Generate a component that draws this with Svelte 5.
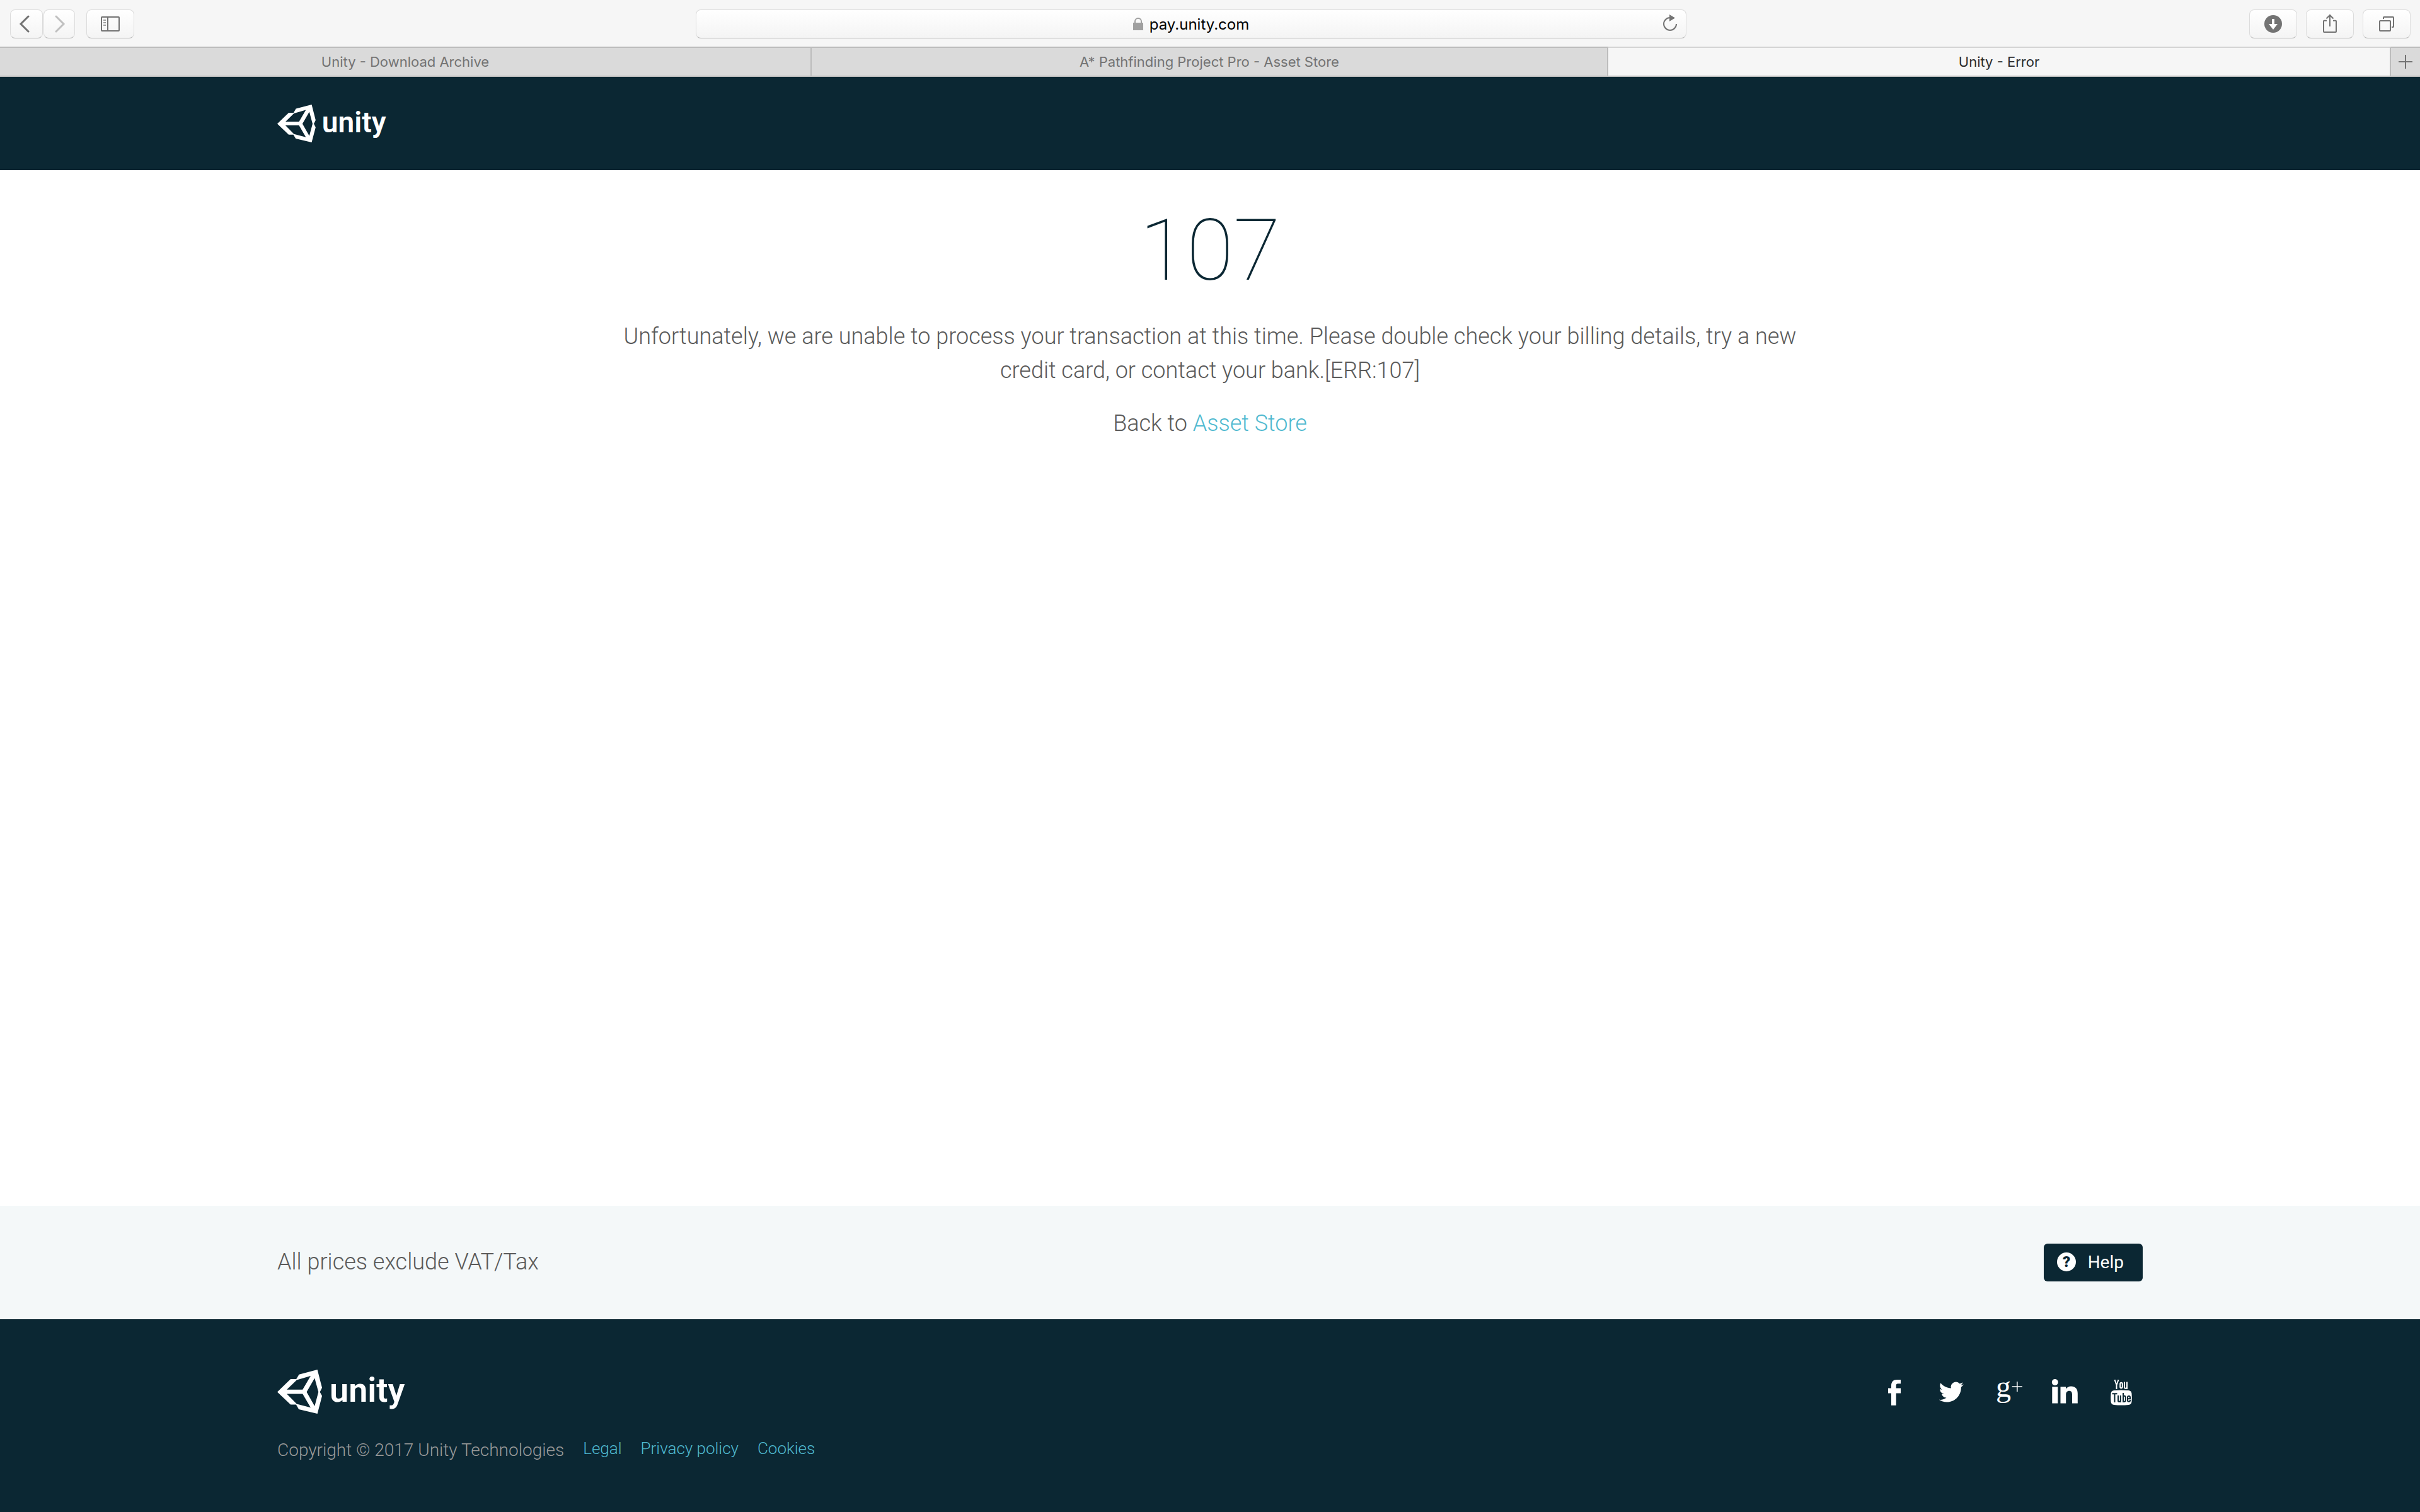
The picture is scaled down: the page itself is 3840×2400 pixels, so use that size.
<script>
  const tabs = [
    { title: 'Unity - Download Archive', active: false },
    { title: 'A* Pathfinding Project Pro - Asset Store', active: false },
    { title: 'Unity - Error', active: true }
  ];
  const legalLinks = ['Legal', 'Privacy policy', 'Cookies'];
</script>

{#snippet cube()}
  <svg class="cube" viewBox="0 0 212 209" aria-hidden="true">
    <path
      fill-rule="evenodd"
      d="M0 106 63 45H90L103 23 190 0 212 86 202 106 212 125 190 209 102 188 89 166H63ZM45 95H120L158 30 92 49ZM45 115 92 163 158 180 120 115ZM177 40 139 106 177 173 195 106Z"
    />
  </svg>
{/snippet}

<div class="window">
  <div class="toolbar">
    <div class="tools">
      <div class="history">
        <button class="tool back" aria-label="Back">
          <svg width="24" height="28" viewBox="0 0 24 28"><path d="M15 2 3 14l12 12" /></svg>
        </button>
        <button class="tool forward" aria-label="Forward">
          <svg width="24" height="28" viewBox="0 0 24 28"><path d="m7 2 12 12L7 26" /></svg>
        </button>
      </div>
      <button class="tool" aria-label="Show sidebar">
        <svg width="32" height="26" viewBox="0 0 32 26">
          <rect x="2" y="2" width="28" height="22" rx="1" />
          <path d="M12 2v22" />
          <path class="faint" d="M5 7h4M5 11h4M5 15h4" />
        </svg>
      </button>
    </div>

    <div class="address">
      <div class="site">
        <svg width="16" height="20" viewBox="0 0 16 20" aria-hidden="true">
          <path class="lock-body" d="M0 8h16v12H0z" />
          <path class="lock-bar" d="M3 9V6a5 5 0 0 1 10 0v3" />
        </svg>
        <input aria-label="Address" value="pay.unity.com" size="12" />
      </div>
      <button class="reload" aria-label="Reload">
        <svg width="24" height="34" viewBox="0 0 24 34">
          <path d="M22 17A10 10 0 1 1 12 7" />
          <path class="solid" d="M11 2l9 5.500-9 5.500z" />
        </svg>
      </button>
    </div>

    <div class="tools right">
      <button class="tool" aria-label="Downloads">
        <svg width="28" height="28" viewBox="0 0 28 28">
          <circle class="solid" cx="14" cy="14" r="14" />
          <path class="cutout" d="M12 6h4v8h5l-7 9-7-9h5z" />
        </svg>
      </button>
      <button class="tool" aria-label="Share">
        <svg width="28" height="32" viewBox="0 0 28 32">
          <path d="M9 10.700H5a1 1 0 0 0-1 1V28a1 1 0 0 0 1 1h18a1 1 0 0 0 1-1V11.700a1 1 0 0 0-1-1h-4M14 20V2M8.500 7.500 14 2l5.500 5.500" />
        </svg>
      </button>
      <button class="tool" aria-label="Show all tabs">
        <svg width="28" height="32" viewBox="0 0 28 32">
          <rect x="3" y="11" width="17" height="16" rx="1" />
          <path d="M9 8V6a1 1 0 0 1 1-1h14a1 1 0 0 1 1 1v14a1 1 0 0 1-1 1h-2" />
        </svg>
      </button>
    </div>
  </div>

  <div class="tabs">
    {#each tabs as tab}
      <button class="tab" class:active={tab.active}>{tab.title}</button>
    {/each}
    <button class="tab add" aria-label="New tab">
      <svg width="22" height="22" viewBox="0 0 22 22"><path d="M11 0v22M0 11h22" /></svg>
    </button>
  </div>

  <header class="band">
    <div class="container">
      <a class="logo" href="#home">{@render cube()}<span>unity</span></a>
    </div>
  </header>

  <main>
    <h1>107</h1>
    <p>
      Unfortunately, we are unable to process your transaction at this time. Please double check
      your billing details, try a new credit card, or contact your bank.[ERR:107]
    </p>
    <p>Back to <a href="#store">Asset Store</a></p>
  </main>

  <section class="prices">
    <div class="container">
      <span class="notice">All prices exclude VAT/Tax</span>
      <button class="help">
        <svg width="32" height="32" viewBox="0 0 32 32" aria-hidden="true">
          <circle cx="16" cy="15" r="15" />
          <text x="16" y="23" text-anchor="middle">?</text>
        </svg>
        Help
      </button>
    </div>
  </section>

  <footer class="band">
    <div class="container">
      <div class="about">
        <a class="logo large" href="#home">{@render cube()}<span>unity</span></a>
        <div class="legal">
          <span class="copyright">Copyright © 2017 Unity Technologies</span>
          {#each legalLinks as link}
            <a href="#legal">{link}</a>
          {/each}
        </div>
      </div>
      <nav class="social" aria-label="Social media">
        <a href="#facebook" aria-label="Facebook">
          <svg viewBox="0 0 48 48"><path d="M19 44.700V25.500h-5v-8h5v-4C19 7 22.500 4 28 4h6v6.300h-4.200c-2.300 0-3.100 1-3.100 3.200v4H34v8h-7.300v19.200z" /></svg>
        </a>
        <a href="#twitter" aria-label="Twitter">
          <svg viewBox="0 0 48 48">
            <path
              transform="translate(4.700 4) scale(1.630)"
              d="M23.953 4.570a10 10 0 01-2.825.775 4.958 4.958 0 002.163-2.723c-.951.555-2.005.959-3.127 1.184a4.920 4.920 0 00-8.384 4.482C7.690 8.095 4.067 6.130 1.640 3.162a4.822 4.822 0 00-.666 2.475c0 1.710.870 3.213 2.188 4.096a4.904 4.904 0 01-2.228-.616v.060a4.923 4.923 0 003.946 4.827 4.996 4.996 0 01-2.212.085 4.936 4.936 0 004.604 3.417 9.867 9.867 0 01-6.102 2.105c-.390 0-.779-.023-1.170-.067a13.995 13.995 0 007.557 2.209c9.053 0 13.998-7.496 13.998-13.985 0-.210 0-.420-.015-.630A9.935 9.935 0 0024 4.590z"
            />
          </svg>
        </a>
        <a href="#google" aria-label="Google Plus">
          <svg viewBox="0 0 48 48">
            <text class="g" x="5" y="31">g</text>
            <path d="M38 7h1.600v7.200H47v1.600h-7.400V23H38v-7.200h-7.300v-1.600H38z" />
          </svg>
        </a>
        <a href="#linkedin" aria-label="LinkedIn">
          <svg viewBox="0 0 48 48">
            <circle cx="8.800" cy="8" r="5" />
            <path d="M4.300 15.300h9v26.200h-9zM17.500 15.300h8.600v3.500c1.700-2.700 4.500-4.300 8.200-4.300 7 0 10.500 4 10.500 11.500v15.500H36V27.700c0-4-1.400-6-4.600-6-3.400 0-5.200 2.300-5.200 6v13.800h-8.700z" />
          </svg>
        </a>
        <a href="#youtube" aria-label="YouTube">
          <svg viewBox="0 0 48 48">
            <path class="line" d="M13.500 4l3 8.500 3-8.500M16.500 12v7M22.200 10.500a1.800 1.800 0 0 1 3.600 0v5a1.800 1.800 0 0 1-3.600 0zM29 7.500V16c0 2.500 2.800 2.300 4 0V7.500M33 15v4" />
            <path d="M12.500 21q11-1 23 0 4.500.500 5 5 .600 7 0 13-.500 4.500-5 5-11.500 1-23 0-4.500-.500-5-5-.600-6 0-13 .500-4.500 5-5z" />
            <path class="line dark" d="M9.500 26.200h8M13.500 26v14M19 29v8.200c0 2.500 2.500 2.300 3.800 0V29M22.800 36v4M27 25v15M27 31c1.200-1.800 3.800-1.600 3.800.700v5.300c0 2.300-2.600 2.500-3.800.500M38 36v.800c0 2.600-4 2.600-4 0V32c0-2.600 4-2.600 4 0v2.300h-4" />
          </svg>
        </a>
      </nav>
    </div>
  </footer>
</div>

<style>
  :global(body) {
    margin: 0;
  }

  .window {
    display: flex;
    flex-direction: column;
    min-height: 100vh;
    background: #fff;
    color: #5a5a5a;
    font: 300 36px/54px Roboto, sans-serif;
  }

  button,
  input {
    margin: 0;
    padding: 0;
    border: 0;
    background: none;
    color: inherit;
    font: inherit;
  }

  a {
    color: #4fb9d0;
    text-decoration: none;
  }

  svg {
    display: block;
    flex: none;
  }

  /* Browser toolbar */
  .toolbar {
    display: grid;
    grid-template-columns: 1104fr 1572fr 1164fr;
    align-items: center;
    box-sizing: border-box;
    height: 74px;
    padding-top: 2px;
    background: #f6f6f6;
    font-family: Inter, sans-serif;
  }

  .toolbar svg,
  .add svg {
    fill: none;
    stroke: #737373;
    stroke-width: 2;
  }

  .tools {
    display: flex;
    gap: 18px;
    padding: 0 15px 0 16px;
  }

  .tools.right {
    justify-content: flex-end;
    gap: 14px;
  }

  .history {
    display: flex;
    gap: 1px;
  }

  .tool,
  .address {
    box-sizing: border-box;
    height: 46px;
    border: 1px solid #dcdcdc;
    border-bottom-color: #b8b8b8;
    border-radius: 8px;
    background: linear-gradient(#fff, #f4f4f4);
  }

  .tool {
    display: flex;
    align-items: center;
    justify-content: center;
    width: 76px;
  }

  .tool.back {
    width: 52px;
  }

  .tool.forward {
    width: 50px;
  }

  .toolbar .back svg,
  .toolbar .forward svg {
    stroke-width: 3;
    stroke-linecap: round;
  }

  .toolbar .forward svg {
    stroke: #c0c0c0;
  }

  .toolbar .faint {
    stroke: #a0a0a0;
  }

  .toolbar .solid {
    fill: #737373;
    stroke: none;
  }

  .toolbar .cutout {
    fill: #fff;
    stroke: none;
  }

  .address {
    display: grid;
    grid-template-columns: 1fr auto 1fr;
    align-items: center;
    padding: 0 13px;
  }

  .site {
    grid-column: 2;
    display: flex;
    align-items: center;
    gap: 10px;
  }

  .site .lock-body {
    fill: #a0a0a0;
    stroke: none;
  }

  .site .lock-bar {
    stroke: #a0a0a0;
  }

  .site input {
    field-sizing: content;
    padding-top: 2px;
    color: #000;
    font-size: 24px;
    font-weight: 400;
    line-height: 32px;
  }

  .reload {
    justify-self: end;
  }

  /* Browser tabs */
  .tabs {
    display: grid;
    grid-template-columns: 1288fr 1264fr 1242fr 46px;
    box-sizing: border-box;
    height: 48px;
    border-bottom: 2px solid #c0c0c0;
  }

  .tab {
    border-top: 2px solid #bcbcbc;
    border-right: 2px solid #bcbcbc;
    background: #dadada;
    color: #737373;
    font: 400 22px/44px Inter, sans-serif;
  }

  .tab.active {
    border-top-color: #d4d4d4;
    background: #f6f6f6;
    color: #2c2c2c;
  }

  .tab.add {
    display: flex;
    align-items: center;
    justify-content: center;
    border-right: 0;
  }

  /* Page */
  .container {
    display: flex;
    justify-content: space-between;
    width: 100%;
    max-width: 2960px;
    margin: 0 auto;
  }

  .band {
    background: #0b2733;
  }

  header,
  .prices {
    display: flex;
    align-items: center;
  }

  header {
    height: 148px;
  }

  .logo {
    display: flex;
    align-items: center;
    gap: 10px;
    color: #fff;
    font-size: 46px;
    font-weight: 600;
    line-height: 60px;
  }

  .logo span {
    padding-bottom: 4px;
  }

  .cube {
    height: 60px;
    fill: #fff;
  }

  header .logo {
    height: 60px;
  }

  .logo.large {
    gap: 12px;
    height: 70px;
    font-size: 54px;
    line-height: 70px;
  }

  .large .cube {
    height: 70px;
  }

  main {
    flex: 1;
    width: 1880px;
    max-width: 100%;
    margin: 0 auto;
    padding-top: 48px;
    text-align: center;
  }

  h1 {
    margin: 0 0 29px;
    color: #0b2733;
    font-size: 136px;
    font-weight: 100;
    line-height: 160px;
  }

  p {
    margin: 0 0 30px;
  }

  .prices {
    height: 180px;
    background: #f4f8f9;
  }

  .prices .container {
    align-items: center;
  }

  .notice {
    padding-bottom: 3px;
  }

  .help {
    display: flex;
    align-items: center;
    gap: 18px;
    height: 60px;
    padding: 0 30px 0 20px;
    border-radius: 6px;
    background: #0b2733;
    color: #fff;
    font-size: 28px;
    font-weight: 400;
  }

  .help circle {
    fill: #fff;
  }

  .help text {
    fill: #0b2733;
    font-size: 24px;
    font-weight: 900;
  }

  footer {
    box-sizing: border-box;
    height: 306px;
    padding-top: 80px;
  }

  .legal {
    display: flex;
    gap: 30px;
    margin-top: 28px;
    font-size: 26px;
  }

  .copyright {
    margin-top: 3px;
    color: #999;
    font-size: 28px;
  }

  .social {
    display: flex;
    gap: 42px;
    padding: 12px 10px 0 0;
  }

  .social svg {
    width: 48px;
    height: 48px;
    overflow: visible;
    fill: #fff;
  }

  .social .g {
    font: 400 48px "Liberation Serif", serif;
  }

  .social .line {
    fill: none;
    stroke: #fff;
    stroke-width: 2;
  }

  .social .dark {
    stroke: #0b2733;
  }
</style>
